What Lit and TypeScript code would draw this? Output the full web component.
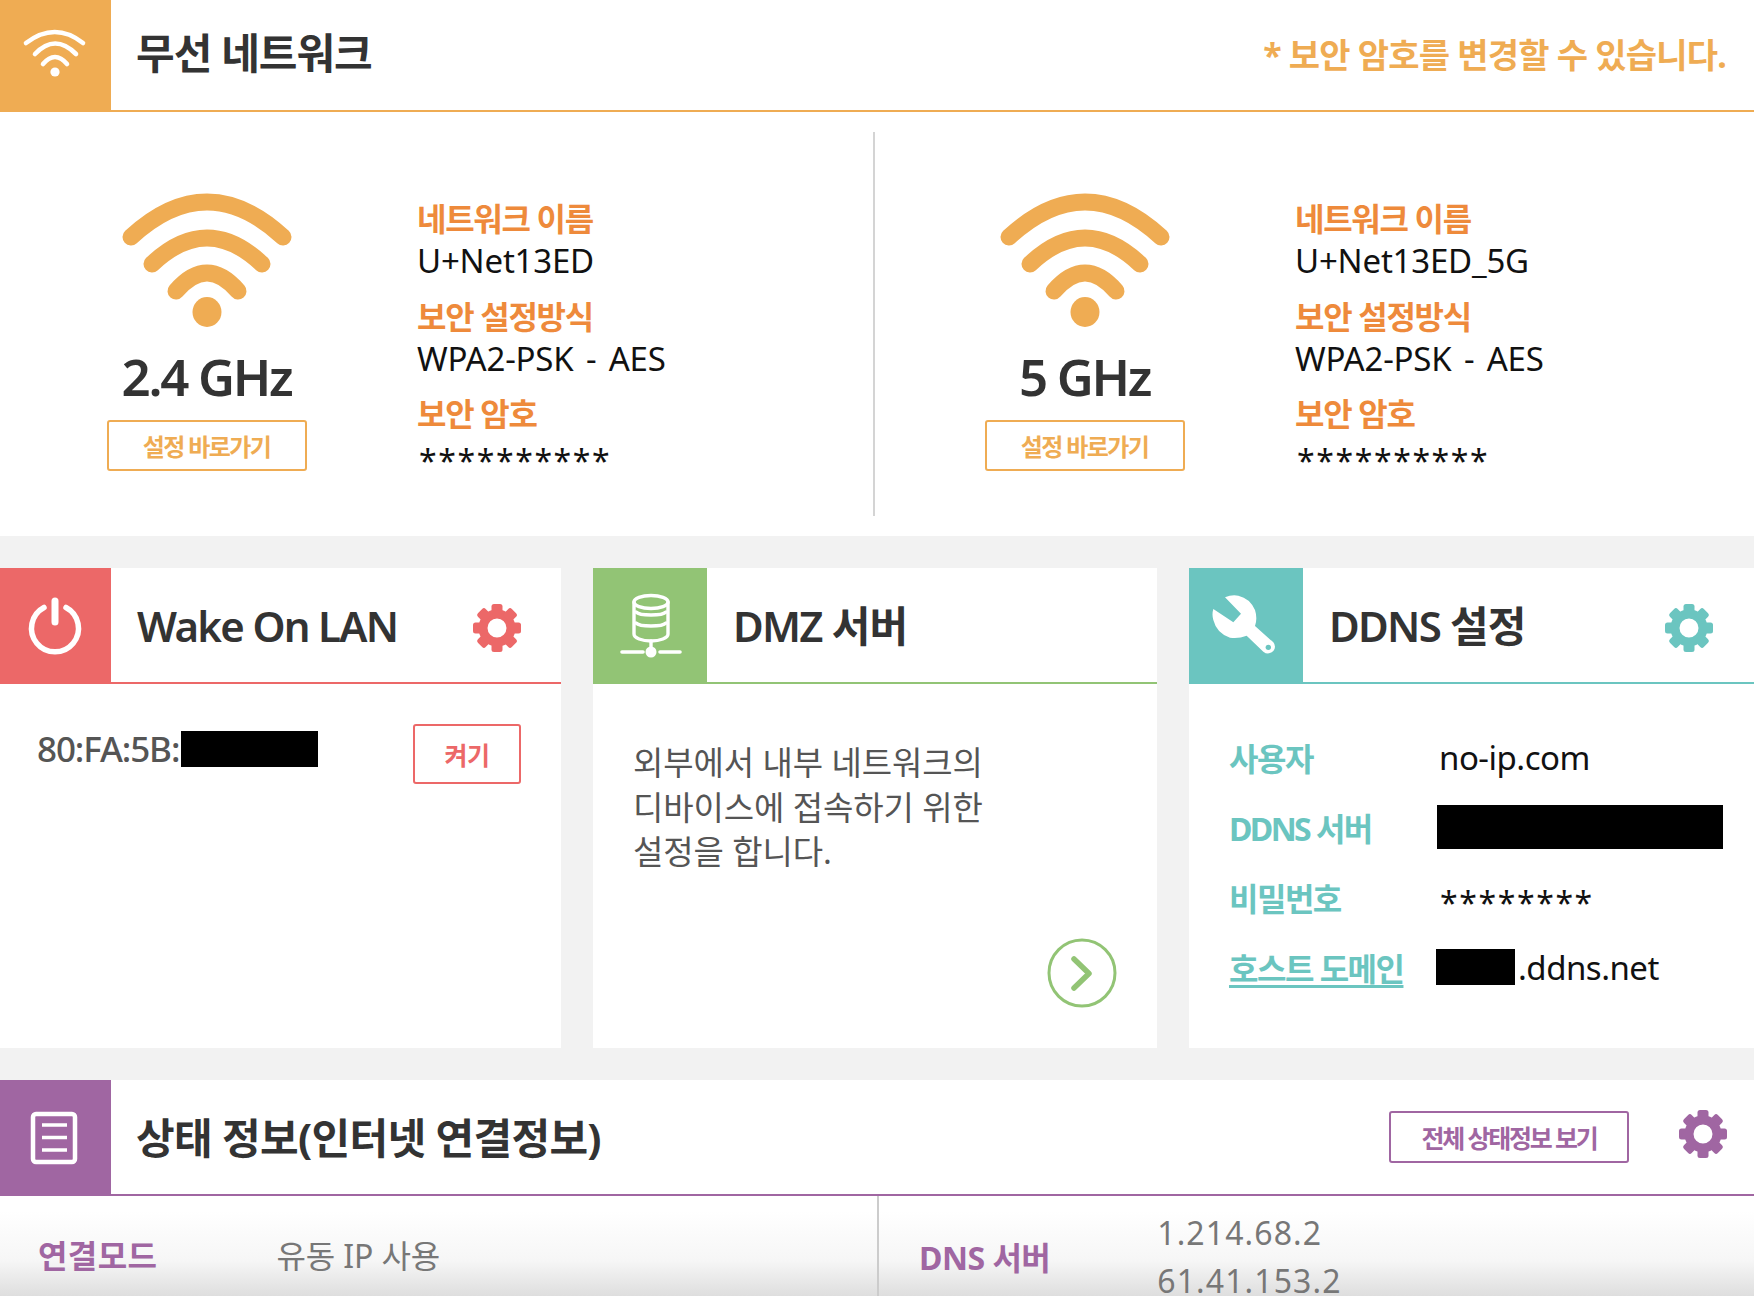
import { LitElement, html, css, svg } from "lit";
import { customElement } from "lit/decorators.js";

const wifiSmall = html`<svg class="ic" width="111" height="110" viewBox="0 0 111 110"><g fill="none" stroke="#fff" stroke-width="4.6" stroke-linecap="round"><path d="M26 43Q55 21 83 43"/><path d="M35 54Q55 33 76 54"/><path d="M43 64Q55 50 67 64"/></g><circle cx="55" cy="72" r="4.6" fill="#fff"/></svg>`;
const wifiBig = html`<svg class="wifi" width="170" height="134" viewBox="0 0 170 134"><g fill="none" stroke="currentColor" stroke-width="17" stroke-linecap="round"><path d="M9 44Q85 -26 161 44"/><path d="M30 71Q85 19 140 71"/><path d="M54 98Q85 62 116 98"/></g><ellipse cx="85" cy="119" rx="14.5" ry="15" fill="currentColor"/></svg>`;
const power = html`<svg class="ic" width="111" height="114" viewBox="0 0 111 114"><g fill="none" stroke="#fff" stroke-linecap="round"><path stroke-width="5.5" d="M44 39.5A23.5 23.5 0 1 0 66 39.5"/><path stroke-width="7" d="M55 33V54"/></g></svg>`;
const db = html`<svg class="ic" width="114" height="114" viewBox="0 0 114 114"><g fill="none" stroke="#fff" stroke-width="3.4" stroke-linecap="round"><ellipse cx="58" cy="34" rx="17" ry="6.5"/><path d="M41 34V66C41 70 49 73 58 73S75 70 75 66V34"/><path d="M43 44C47 48 69 48 73 44"/><path d="M43 55C47 59 69 59 73 55"/><path d="M58 73V84"/><path stroke-width="3.6" d="M29 84H50M67 84H87"/></g><circle cx="58" cy="84" r="5.5" fill="#fff"/></svg>`;
const wrench = html`<svg class="ic" width="114" height="114" viewBox="12 9 342 342"><path fill="#fff" d="M120 97Q140 88 160 92Q195 100 210 135Q218 160 210 183L265 232Q275 245 265 258Q250 272 235 260L185 212Q160 222 135 218Q95 205 85 165Q80 148 85 132L145 172L168 146Z"/><circle cx="250" cy="247" r="8" fill="#6bc5c0"/></svg>`;
const doc = html`<svg class="ic" width="111" height="114" viewBox="0 0 111 114"><rect x="33" y="34" width="42" height="48" rx="3" fill="none" stroke="#fff" stroke-width="4.5"/><path d="M42 45H67M42 57.5H67M42 70H67" stroke="#fff" stroke-width="3.5" fill="none"/></svg>`;
const gear = html`<svg class="gear" width="48" height="48" viewBox="-24 -24 48 48"><circle r="14" fill="none" stroke="currentColor" stroke-width="9"/>${[0, 45, 90, 135, 180, 225, 270, 315].map((a) => svg`<rect x="-5.5" y="-24" width="11" height="11" rx="2.5" fill="currentColor" transform="rotate(${a})"></rect>`)}</svg>`;
const arrow = html`<svg class="arrow" width="70" height="70" viewBox="0 0 70 70"><circle cx="35" cy="35" r="33" fill="none" stroke="currentColor" stroke-width="3"/><path d="M27 21L42 35.5L27 50" fill="none" stroke="currentColor" stroke-width="5.5" stroke-linecap="round" stroke-linejoin="round"/></svg>`;

@customElement("app-root")
export class AppRoot extends LitElement {
  static styles = css`
    :host { display: block; width: 1754px; height: 1296px; overflow: hidden; background: #f2f2f2; color: #333;
      font-family: "Noto Sans", "Noto Sans CJK KR", sans-serif; }
    .orange { --c: #efac53; } .red { --c: #ec6868; } .green { --c: #92c475; } .teal { --c: #6bc5c0; } .purple { --c: #a066a2; }
    .panel { background: #fff; }
    .head { display: flex; align-items: center; height: 116px; box-sizing: border-box; border-bottom: 2px solid var(--c); }
    .head.short { height: 112px; }
    .iconbox { align-self: stretch; width: 114px; margin-bottom: -2px; background: var(--c); flex: none; }
    .iconbox.nar { width: 111px; }
    .ic { display: block; }
    .title { margin: 2px 0 0 26px; font-size: 42px; font-weight: 700; letter-spacing: -1px; line-height: 50px; white-space: nowrap; flex: 1; }
    .short .title { margin: 0 0 4px 25px; }
    .status .title { margin-left: 25px; letter-spacing: -.7px; }
    .lat { font-weight: 600; letter-spacing: -1.7px; }
    .gear { color: var(--c); flex: none; margin: 6px 40px 0 0; display: block; }
    .teal .gear { margin-right: 41px; }
    .note { color: var(--c); font-size: 34px; font-weight: 700; letter-spacing: -.8px; margin: 0 28px 4px 0; }
    .bands { display: grid; grid-template-columns: 875px 879px; height: 384px; margin-top: 20px; }
    .band { display: flex; }
    .band + .band { padding-left: 110px; }
    .band:first-child { border-right: 2px solid #d4d4d4; box-sizing: border-box; padding-left: 107px; }
    .radio { width: 199px; display: flex; flex-direction: column; align-items: center; padding-top: 61px; color: #efac53; }
    .ghz { font-size: 51px; font-weight: 600; letter-spacing: -2.3px; color: #333; line-height: 60px; margin-top: 19px; }
    .btn { box-sizing: border-box; border: 2px solid var(--c); border-radius: 3px; background: #fff; color: var(--c); font: inherit; font-weight: 700; display: flex; align-items: center; justify-content: center; letter-spacing: -1.6px; white-space: nowrap; }
    .set { width: 200px; height: 51px; font-size: 24px; margin-top: 14px; flex: none; }
    .info { margin-left: 111px; padding-top: 66px; }
    .lab { color: #ee8a3b; font-size: 32px; font-weight: 700; letter-spacing: -1.3px; line-height: 41px; }
    .val { color: #111; font-size: 33px; line-height: 43px; margin-bottom: 13.5px; letter-spacing: -.2px; word-spacing: 4px; }
    .stars { letter-spacing: 1.6px; font-size: 32px; padding: 5px 0 0 2px; }
    .cards { display: grid; grid-template-columns: 561px 564px 565px; gap: 32px; height: 480px; margin-top: 32px; }
    .card { display: flex; flex-direction: column; }
    .wol { display: flex; align-items: flex-start; padding: 40px 40px 0 37px; }
    .mac { font-size: 35px; font-weight: 500; color: #555; letter-spacing: -1.1px; line-height: 36px; margin-top: 7px; }
    .bar { display: inline-block; background: #000; flex: none; }
    .b1 { width: 137px; height: 36px; margin: 7px 0 0 2px; }
    .on { width: 108px; height: 60px; font-size: 25px; margin-left: auto; letter-spacing: -.5px; }
    .dmz { flex: 1; padding: 57px 40px 40px 40px; display: flex; flex-direction: column; }
    .dmz p { margin: 0; color: #555; font-size: 33px; letter-spacing: -.1px; line-height: 44.5px; }
    .arrow { color: var(--c); align-self: flex-end; margin-top: auto; display: block; }
    .ddns { padding: 38px 0 0 40px; display: grid; grid-template-columns: 210px 1fr; grid-auto-rows: 70px; align-items: center; }
    .dl { color: var(--c); font-size: 32px; font-weight: 700; letter-spacing: -1.5px; white-space: nowrap; }
    .dl.u { text-decoration: underline; text-underline-offset: 4px; }
    .tight { letter-spacing: -2.6px; }
    .dv { color: #111; font-size: 33px; letter-spacing: -.5px; display: flex; align-items: center; white-space: nowrap; }
    .b2 { width: 286px; height: 44px; margin-left: -2px; }
    .b3 { width: 79px; height: 36px; margin: 0 3px 0 -3px; }
    .dv.st { letter-spacing: 1.6px; font-size: 32px; padding: 11px 0 0 1px; }
    .status { margin-top: 32px; height: 216px; }
    .all { width: 240px; height: 52px; font-size: 25px; letter-spacing: -2.2px; margin-right: 50px; }
    .status .gear { margin: 0 27px 6px 0; }
    .rows { height: 100px; display: grid; grid-template-columns: 877px 1fr; background: linear-gradient(#fff 15%, #f6f6f6 65%, #dedede); overflow: hidden; }
    .rw { display: flex; align-items: center; padding-left: 38px; height: 116px; }
    .rw + .rw { border-left: 2px solid #ccc; padding-left: 40px; height: 122px; }
    .rl { color: var(--c); font-size: 32px; font-weight: 700; letter-spacing: .4px; white-space: nowrap; }
    .rw + .rw .rl { letter-spacing: -.5px; margin-bottom: 2px; }
    .rv { color: #777; font-size: 32px; letter-spacing: -.1px; }
    .m1 { margin-left: 119px; }
    .m2 { margin-left: 107px; line-height: 48px; letter-spacing: 1.1px; }
    .pad { height: 20px; }
  `;

  private band(ghz: string, ssid: string) {
    return html`<div class="band orange">
      <div class="radio">${wifiBig}<div class="ghz">${ghz}</div><div class="btn set">설정 바로가기</div></div>
      <div class="info">
        <div class="lab">네트워크 이름</div><div class="val">${ssid}</div>
        <div class="lab">보안 설정방식</div><div class="val">WPA2-PSK - AES</div>
        <div class="lab">보안 암호</div><div class="val stars">**********</div>
      </div>
    </div>`;
  }

  render() {
    return html`
      <section class="panel wifi-panel">
        <div class="head short orange">
          <div class="iconbox nar">${wifiSmall}</div>
          <div class="title">무선 네트워크</div>
          <div class="note">* 보안 암호를 변경할 수 있습니다.</div>
        </div>
        <div class="bands">${this.band("2.4 GHz", "U+Net13ED")}${this.band("5 GHz", "U+Net13ED_5G")}</div>
        <div class="pad"></div>
      </section>
      <div class="cards">
        <section class="panel card red">
          <div class="head"><div class="iconbox nar">${power}</div><div class="title lat">Wake On LAN</div>${gear}</div>
          <div class="wol"><span class="mac">80:FA:5B:</span><span class="bar b1"></span><div class="btn on">켜기</div></div>
        </section>
        <section class="panel card green">
          <div class="head"><div class="iconbox">${db}</div><div class="title"><span class="lat">DMZ</span> 서버</div></div>
          <div class="dmz"><p>외부에서 내부 네트워크의<br />디바이스에 접속하기 위한<br />설정을 합니다.</p>${arrow}</div>
        </section>
        <section class="panel card teal">
          <div class="head"><div class="iconbox">${wrench}</div><div class="title"><span class="lat">DDNS</span> 설정</div>${gear}</div>
          <div class="ddns">
            <div class="dl">사용자</div><div class="dv">no-ip.com</div>
            <div class="dl"><span class="tight">DDNS</span> 서버</div><div class="dv"><span class="bar b2"></span></div>
            <div class="dl">비밀번호</div><div class="dv st">********</div>
            <div class="dl u">호스트 도메인</div><div class="dv"><span class="bar b3"></span>.ddns.net</div>
          </div>
        </section>
      </div>
      <section class="panel status purple">
        <div class="head">
          <div class="iconbox nar">${doc}</div>
          <div class="title">상태 정보(인터넷 연결정보)</div>
          <div class="btn all">전체 상태정보 보기</div>
          ${gear}
        </div>
        <div class="rows">
          <div class="rw"><span class="rl">연결모드</span><span class="rv m1">유동 IP 사용</span></div>
          <div class="rw"><span class="rl">DNS 서버</span><span class="rv m2">1.214.68.2<br />61.41.153.2</span></div>
        </div>
      </section>
    `;
  }
}
